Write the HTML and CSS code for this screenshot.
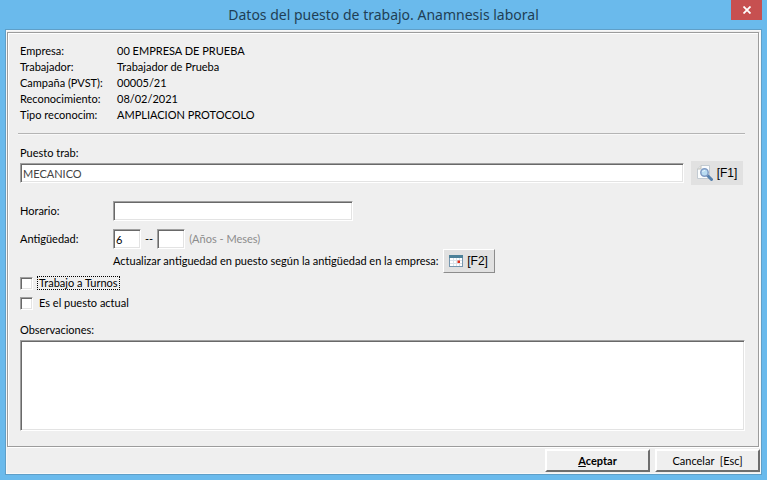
FILE: index.html
```
<!DOCTYPE html>
<html lang="es">
<head>
    <meta charset="UTF-8">
    <meta name="viewport" content="width=device-width, initial-scale=1.0">
    <title>Datos del puesto de trabajo. Anamnesis laboral</title>
    <link rel="stylesheet" href="styles.css">
</head>
<body>

<header class="titlebar">
    <h1>Datos del puesto de trabajo. Anamnesis laboral</h1>
    <button type="button" class="close" aria-label="Cerrar">
        <svg width="8" height="8" viewBox="0 0 8 8"><path d="M0.5 0.5 L7.5 7.5 M7.5 0.5 L0.5 7.5" stroke="#fff" stroke-width="1.8"/></svg>
    </button>
</header>

<form class="client">
    <div class="panel">
        <dl class="info">
            <dt>Empresa:</dt><dd>00 EMPRESA DE PRUEBA</dd>
            <dt>Trabajador:</dt><dd>Trabajador de Prueba</dd>
            <dt>Campaña (PVST):</dt><dd>00005/21</dd>
            <dt>Reconocimiento:</dt><dd>08/02/2021</dd>
            <dt>Tipo reconocim:</dt><dd>AMPLIACION PROTOCOLO</dd>
        </dl>

        <hr>

        <label for="puesto">Puesto trab:</label>
        <div class="puesto">
            <input type="text" id="puesto" class="readonly" value="MECANICO" readonly>
            <button type="button" class="tool flat">
                <svg width="16" height="16" viewBox="0 0 16 16">
                    <path d="M4 0.5 H12.5 V13.5 H0.5 V4 Z" fill="#fafcfd" stroke="#c3cbd2"/>
                    <path d="M4 0.5 V4 H0.5" fill="#e3e3e0" stroke="#c0c0bc"/>
                    <path d="M10.5 10.5 L14.5 14.5" stroke="#5580ad" stroke-width="3" stroke-linecap="round"/>
                    <circle cx="7.5" cy="7.5" r="3.7" fill="#b9dcf2" stroke="#7f9bc4" stroke-width="1.5"/>
                    <path d="M5.5 7 Q6 5.5 8 5.5" fill="none" stroke="#e9f7ff"/>
                </svg>
                [F1]
            </button>
        </div>

        <div class="fields">
            <label for="horario">Horario:</label>
            <input type="text" id="horario" class="horario">
            <label for="anios">Antigüedad:</label>
            <div class="antiguedad">
                <input type="text" id="anios" class="short" value="6">
                <span>--</span>
                <input type="text" class="short" aria-label="Meses">
                <span class="hint">(Años - Meses)</span>
            </div>
        </div>

        <div class="actualizar">
            <span>Actualizar antiguedad en puesto según la antigüedad en la empresa:</span>
            <button type="button" class="tool raised">
                <svg width="14" height="12" viewBox="0 0 14 12">
                    <rect x="0.5" y="0.5" width="13" height="11" fill="#fff" stroke="#7697b0"/>
                    <rect width="14" height="3" fill="#4d8199"/>
                    <path d="M1 5.5 H13 M1 8.5 H13 M4.5 3 V11 M7.5 3 V11 M10.5 3 V11" stroke="#dbe3ea"/>
                    <rect x="8.5" y="5.5" width="2.5" height="2.5" fill="#e02c18"/>
                </svg>
                [F2]
            </button>
        </div>

        <label class="check"><input type="checkbox"><span class="focused">Trabajo a Turnos</span></label>
        <label class="check"><input type="checkbox"><span>Es el puesto actual</span></label>

        <label class="obs-label" for="obs">Observaciones:</label>
        <textarea id="obs"></textarea>
    </div>

    <div class="actions">
        <button type="submit" class="accept"><u>A</u>ceptar</button>
        <button type="button">Cancelar&nbsp; [Esc]</button>
    </div>
</form>

</body>
</html>
```
FILE: styles.css
```
* {
    box-sizing: border-box;
}

body {
    display: flex;
    flex-direction: column;
    min-height: 100vh;
    margin: 0;
    padding: 0 5px 5px;
    background-color: #6abaec;
    font-family: Lato, "Liberation Sans", sans-serif;
    font-size: 11px;
    line-height: 16px;
    color: #000;
}

input, textarea, button {
    font: inherit;
    color: inherit;
}

/* Title bar */
.titlebar {
    position: relative;
    height: 29px;
}

h1 {
    margin: 0;
    padding-top: 5px;
    font-family: "Noto Sans", sans-serif;
    font-size: 14px;
    font-weight: normal;
    line-height: 20px;
    text-align: center;
    color: #1f3f55;
}

.close {
    position: absolute;
    top: 0;
    right: 0;
    display: flex;
    align-items: center;
    justify-content: center;
    width: 31px;
    height: 20px;
    padding: 0;
    border: 0;
    background-color: #c75050;
}

/* Window contents */
.client {
    display: flex;
    flex-direction: column;
    flex: 1;
    padding: 2px 1px;
    border: 1px solid #5f9fc8;
    background-color: #efefef;
    box-shadow: inset 0 0 0 1px #f8f8f8;
}

.panel {
    display: flex;
    flex-direction: column;
    flex: 1;
    margin-right: 1px;
    padding: 10px 13px 15px 12px;
    border: 1px solid #9c9c9c;
    box-shadow: inset 1px 1px #fff, 1px 1px #fff;
}

.info {
    display: grid;
    grid-template-columns: 97px 1fr;
    margin: 0;
}

.info dd {
    margin: 0;
}

hr {
    align-self: stretch;
    margin: 10px 0 10px -2px;
    border: 0;
    border-top: 1px solid #b4b4b4;
    border-bottom: 1px solid #f8f8f8;
}

input[type="text"], textarea, .check input {
    border: 1px solid;
    border-color: #a0a0a0 #fff #fff #a0a0a0;
    border-radius: 0;
    background-color: #fff;
    box-shadow: inset 1px 1px #696969, inset -1px -1px #e3e3e3;
    outline: 0;
}

input[type="text"] {
    height: 20px;
    padding: 0 2px;
}

.readonly {
    color: #444;
}

.puesto {
    display: flex;
    align-items: center;
    gap: 7px;
    margin-right: 2px;
}

.puesto input {
    flex: 1;
    min-width: 0;
}

.tool {
    display: flex;
    align-items: center;
    justify-content: center;
    gap: 4px;
    width: 52px;
    height: 24px;
    padding: 0;
    font-family: "Liberation Sans", Arial, sans-serif;
    font-size: 12px;
}

.flat {
    border: 0;
    background-color: #e1e1e1;
}

.raised {
    border: 1px solid;
    border-color: #fff #8c8c8c #8c8c8c #fff;
    background-color: #e1e1e1;
}

.fields {
    display: grid;
    grid-template-columns: 93px 1fr;
    align-items: center;
    row-gap: 8px;
    margin-top: 16px;
}

.horario {
    width: 240px;
}

.antiguedad {
    display: flex;
    align-items: center;
    gap: 4px;
}

.short {
    width: 28px;
}

.hint {
    color: #8c8c8c;
}

.actualizar {
    display: flex;
    align-items: center;
    gap: 4px;
    margin-left: 93px;
}

.check {
    display: flex;
    align-items: center;
    gap: 4px;
    height: 20px;
}

.check input {
    appearance: none;
    width: 13px;
    height: 13px;
    margin: 0;
}

.check span {
    padding: 0 1px;
    border: 1px dotted transparent;
    line-height: 12px;
}

.check .focused {
    border-color: #000;
}

.obs-label {
    margin: 9px 0 2px;
}

textarea {
    flex: 1;
    min-height: 90px;
    resize: none;
}

/* Bottom buttons */
.actions {
    display: flex;
    justify-content: flex-end;
    gap: 5px;
    padding-top: 2px;
}

.actions button {
    width: 105px;
    height: 23px;
    padding: 0;
    border: 2px solid;
    border-color: #fff #6e6e6e #6e6e6e #fff;
    background-color: #efefef;
}

.actions .accept {
    font-weight: bold;
}
```
